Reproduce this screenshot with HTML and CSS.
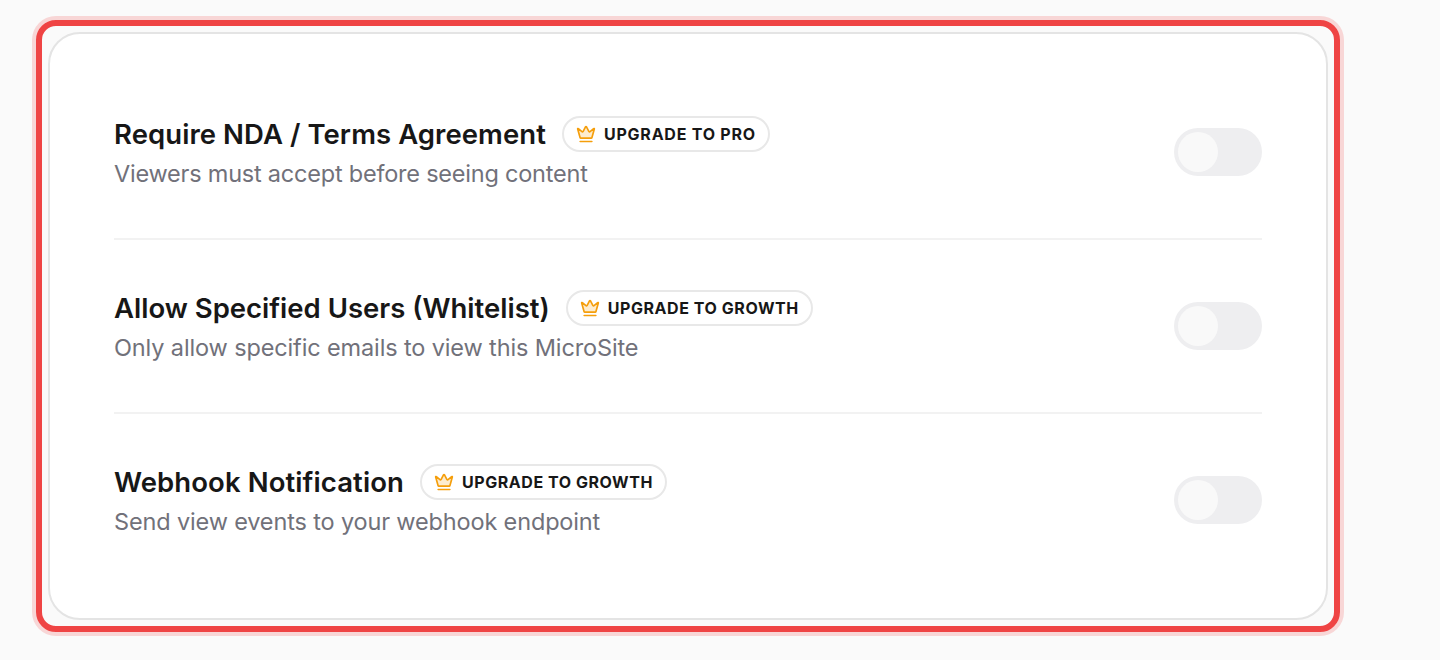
FILE: index.html
```html
<!DOCTYPE html>
<html lang="en">
<head>
<meta charset="utf-8">
<title>MicroSite access settings</title>
<link rel="stylesheet" href="styles.css">
</head>
<body>
<svg class="symbols" aria-hidden="true">
  <symbol id="crown" viewBox="0 0 24 24">
    <path class="crown-body" d="M11.562 3.266a.5.5 0 0 1 .876 0L15.39 8.87a1 1 0 0 0 1.516.294L21.183 5.5a.5.5 0 0 1 .798.519l-2.834 10.246a1 1 0 0 1-.956.734H5.81a1 1 0 0 1-.957-.734L2.02 6.02a.5.5 0 0 1 .798-.519l4.276 3.664a1 1 0 0 0 1.516-.294z"/>
    <path d="M5 21h14"/>
  </symbol>
</svg>
<main class="highlight">
  <section class="card">
    <div class="row">
      <div class="info">
        <div class="heading"><h2 class="title title-nda">Require NDA / Terms Agreement</h2><span class="badge"><svg class="crown"><use href="#crown"/></svg><span class="badge-text badge-pro">UPGRADE TO PRO</span></span></div>
        <p class="desc desc-nda">Viewers must accept before seeing content</p>
      </div>
      <button class="switch" role="switch" aria-checked="false" disabled><span class="thumb"></span></button>
    </div>
    <div class="row">
      <div class="info">
        <div class="heading"><h2 class="title title-users">Allow Specified Users (Whitelist)</h2><span class="badge"><svg class="crown"><use href="#crown"/></svg><span class="badge-text">UPGRADE TO GROWTH</span></span></div>
        <p class="desc desc-users">Only allow specific emails to view this MicroSite</p>
      </div>
      <button class="switch" role="switch" aria-checked="false" disabled><span class="thumb"></span></button>
    </div>
    <div class="row">
      <div class="info">
        <div class="heading"><h2 class="title title-webhook">Webhook Notification</h2><span class="badge"><svg class="crown"><use href="#crown"/></svg><span class="badge-text">UPGRADE TO GROWTH</span></span></div>
        <p class="desc desc-webhook">Send view events to your webhook endpoint</p>
      </div>
      <button class="switch" role="switch" aria-checked="false" disabled><span class="thumb"></span></button>
    </div>
  </section>
</main>
</body>
</html>
```

FILE: styles.css
```css
* { box-sizing: border-box; }
body {
  margin: 0;
  min-height: 660px;
  padding: 20px 100px 28px 36px;
  background: #fafafa;
  font-family: Inter, "Liberation Sans", sans-serif;
  color: #171717;
}
.symbols { display: none; }
.highlight {
  padding: 6px;
  border: 6px solid #ef4444;
  border-radius: 20px;
  box-shadow: 0 0 0 4px rgba(239, 68, 68, 0.2);
}
.card {
  height: 588px;
  padding: 32px 64px;
  border: 2px solid #e4e4e4;
  border-radius: 32px;
  background: #fff;
}
.row {
  display: flex;
  align-items: center;
  justify-content: space-between;
  height: 172px;
}
.row + .row {
  height: 174px;
  border-top: 2px solid #f2f2f2;
}
.heading {
  display: flex;
  align-items: center;
  gap: 16px;
  height: 36px;
}
.title {
  margin: 0;
  font-size: 27.5px;
  font-weight: 600;
  line-height: 36px;
  white-space: nowrap;
}
.title-nda { letter-spacing: 0.07px; }
.title-webhook { letter-spacing: 0.09px; }
.desc {
  margin: 0;
  padding-top: 6px;
  height: 36px;
  font-size: 23.5px;
  line-height: 32px;
  color: #71717a;
  white-space: nowrap;
}
.desc-nda { letter-spacing: -0.22px; }
.desc-users { letter-spacing: -0.13px; }
.desc-webhook { letter-spacing: -0.15px; }
.badge {
  display: flex;
  align-items: center;
  gap: 8px;
  height: 36px;
  padding: 0 12px;
  border: 2px solid #e8e8e8;
  border-radius: 18px;
}
.badge-text {
  font-size: 16px;
  font-weight: 700;
  line-height: 20px;
  letter-spacing: 0.56px;
  white-space: nowrap;
}
.badge-pro { letter-spacing: 0.77px; }
.crown {
  width: 20px;
  height: 20px;
  fill: none;
  stroke: #f59e0b;
  stroke-width: 2;
  stroke-linecap: round;
  stroke-linejoin: round;
}
.crown-body { fill: #fdecce; }
.switch {
  width: 88px;
  height: 48px;
  padding: 4px;
  border: 0;
  border-radius: 24px;
  background: #eeeef0;
}
.thumb {
  display: block;
  width: 40px;
  height: 40px;
  border-radius: 50%;
  background: #f9f9f9;
}
```
